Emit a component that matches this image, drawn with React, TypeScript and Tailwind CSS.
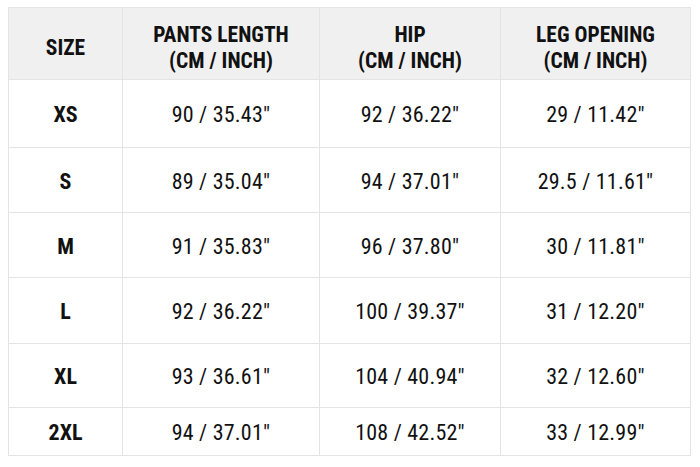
import React from "react";

const rows = [
  ["XS", "90 / 35.43\"", "92 / 36.22\"", "29 / 11.42\"", "h-[68px]"],
  ["S", "89 / 35.04\"", "94 / 37.01\"", "29.5 / 11.61\"", "h-[65px]"],
  ["M", "91 / 35.83\"", "96 / 37.80\"", "30 / 11.81\"", "h-[65px]"],
  ["L", "92 / 36.22\"", "100 / 39.37\"", "31 / 12.20\"", "h-[66px]"],
  ["XL", "93 / 36.61\"", "104 / 40.94\"", "32 / 12.60\"", "h-[64px]"],
  ["2XL", "94 / 37.01\"", "108 / 42.52\"", "33 / 12.99\"", "h-[48px]"],
];

const th = "border border-[#e4e4e4] text-[21.5px] leading-[26px] font-bold pt-[8px] align-middle";
const td = "border border-[#e4e4e4] text-center pt-[2px]";

export default function App() {
  return (
    <div className="w-[700px] h-[467px] bg-white pl-[8px] pt-[7px] text-[#111] font-['Roboto',sans-serif] [font-stretch:75%]">
      <table className="w-[682px] border-collapse table-fixed">
        <colgroup>
          <col className="w-[114px]" />
          <col className="w-[197px]" />
          <col className="w-[181px]" />
          <col className="w-[190px]" />
        </colgroup>
        <thead>
          <tr className="h-[72px] bg-[#f0f0f0]">
            <th className={th}>SIZE</th>
            <th className={th}>
              PANTS LENGTH
              <br />
              (CM / INCH)
            </th>
            <th className={th}>
              HIP
              <br />
              (CM / INCH)
            </th>
            <th className={th}>
              LEG OPENING
              <br />
              (CM / INCH)
            </th>
          </tr>
        </thead>
        <tbody>
          {rows.map((r) => (
            <tr key={r[0]} className={r[4]}>
              <td className={td + " text-[22px] font-bold"}>{r[0]}</td>
              <td className={td + " text-[22px] font-normal tracking-[0.2px]"}>{r[1]}</td>
              <td className={td + " text-[22px] font-normal tracking-[0.2px]"}>{r[2]}</td>
              <td className={td + " text-[22px] font-normal tracking-[0.2px]"}>{r[3]}</td>
            </tr>
          ))}
        </tbody>
      </table>
    </div>
  );
}
